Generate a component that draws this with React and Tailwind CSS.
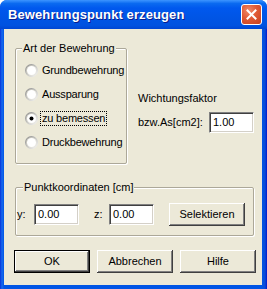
function Radio({ checked }) {
  return (
    <svg width="13" height="13" viewBox="0 0 13 13" className="shrink-0">
      <defs>
        <linearGradient id="ro" x1="0" y1="0" x2="1" y2="1">
          <stop offset="0" stopColor="#808080" />
          <stop offset="1" stopColor="#ffffff" />
        </linearGradient>
        <linearGradient id="ri" x1="0" y1="0" x2="1" y2="1">
          <stop offset="0" stopColor="#b8b6ac" />
          <stop offset="1" stopColor="#f4f3ee" />
        </linearGradient>
      </defs>
      <circle cx="6.5" cy="6.5" r="6.5" fill="url(#ro)" />
      <circle cx="6.5" cy="6.5" r="5.5" fill="url(#ri)" />
      <circle cx="6.5" cy="6.5" r="4.5" fill="#ffffff" />
      {checked && <circle cx="6.5" cy="6.5" r="2" fill="#000000" />}
    </svg>
  );
}

function Field({ value, className = "" }) {
  return (
    <div
      className={`h-[21px] w-[45px] shrink-0 bg-white border border-t-[#808080] border-l-[#808080] border-r-white border-b-white shadow-[inset_1px_1px_0_#404040,inset_-1px_-1px_0_#d4d0c8] pl-[3px] flex items-center ${className}`}
    >
      {value}
    </div>
  );
}

function Button({ label, primary, className = "" }) {
  return (
    <div
      className={`h-[23px] w-[76px] shrink-0 flex items-center justify-center bg-[#ece9d8] ${
        primary
          ? "border border-black shadow-[inset_-1px_-1px_0_#404040,inset_1px_1px_0_#ffffff,inset_-2px_-2px_0_#808080]"
          : "shadow-[inset_-1px_-1px_0_#404040,inset_1px_1px_0_#ffffff,inset_-2px_-2px_0_#808080]"
      } ${className}`}
    >
      {label}
    </div>
  );
}

export default function App() {
  const options = [
    { label: "Grundbewehrung" },
    { label: "Aussparung" },
    { label: "zu bemessen", checked: true },
    { label: "Druckbewehrung" },
  ];

  return (
    <div className="w-[267px] h-[289px] flex flex-col rounded-t-[7px] overflow-hidden bg-[linear-gradient(to_right,#0831d9_0px,#166aee_2px,#0055e5_4px,#0055e5_262px,#0a4cd6_265px,#0019cf_267px)] font-['Liberation_Sans',Arial,sans-serif] text-[11px] text-black">
      {/* title bar */}
      <div className="h-[29px] shrink-0 flex items-center justify-between pl-[8px] pr-[5px] bg-[linear-gradient(to_bottom,#3d95ff_0%,#0a6af0_12%,#0058ee_28%,#0055e5_60%,#0052e0_88%,#0046d2_100%)]">
        <span className="text-white font-bold text-[13px] tracking-[0.1px] [text-shadow:1px_1px_0_#0a1e8c]">
          Bewehrungspunkt erzeugen
        </span>
        <div className="w-[21px] h-[21px] rounded-[3px] border border-white bg-[radial-gradient(circle_at_35%_30%,#f08a6a_0%,#e05a35_45%,#c8401e_100%)] flex items-center justify-center">
          <svg width="11" height="11" viewBox="0 0 11 11">
            <path d="M1.5 1.5 L9.5 9.5 M9.5 1.5 L1.5 9.5" stroke="#ffffff" strokeWidth="2" strokeLinecap="square" />
          </svg>
        </div>
      </div>

      {/* body */}
      <div className="flex-1 ml-[4px] mr-[5px] mb-[4px] bg-[#ece9d8] pt-[19px] pl-[10px]">
        <div className="flex">
          <div className="relative ml-[1px] w-[112px] h-[116px] shrink-0 border border-[#aca899] rounded-[2px] shadow-[1px_1px_0_#ffffff,inset_1px_1px_0_#ffffff]">
            <span className="absolute -top-[7px] left-[6px] px-[1px] leading-[13px] bg-[#ece9d8]">
              Art der Bewehrung
            </span>
            <div className="flex flex-col pt-[9px] pl-[9px]">
              {options.map((o) => (
                <div key={o.label} className="h-[24px] flex items-center gap-[3px]">
                  <Radio checked={o.checked} />
                  <span
                    className={`leading-[13px] tracking-[-0.2px] ${
                      o.checked ? "border border-dotted border-black px-[1px] -ml-[1px]" : "pl-[1px]"
                    }`}
                  >
                    {o.label}
                  </span>
                </div>
              ))}
            </div>
          </div>

          <div className="ml-[11px] flex flex-col pt-[44px]">
            <span className="leading-[13px]">Wichtungsfaktor</span>
            <div className="mt-[7px] flex items-center">
              <span className="w-[71px] shrink-0">bzw.As[cm2]:</span>
              <Field value="1.00" />
            </div>
          </div>
        </div>

        <div className="relative ml-[1px] mt-[23px] w-[239px] h-[49px] border border-[#aca899] rounded-[2px] shadow-[1px_1px_0_#ffffff,inset_1px_1px_0_#ffffff]">
          <span className="absolute -top-[7px] left-[7px] px-[1px] leading-[13px] bg-[#ece9d8]">
            Punktkoordinaten [cm]
          </span>
          <div className="flex items-center pt-[15px] pl-[1px]">
            <span className="w-[17px] shrink-0">y:</span>
            <Field value="0.00" />
            <span className="ml-[15px] w-[15px] shrink-0">z:</span>
            <Field value="0.00" />
            <Button label="Selektieren" className="ml-[15px] h-[22px] w-[75px]" />
          </div>
        </div>

        <div className="mt-[14px] flex gap-[6px]">
          <Button label="OK" primary />
          <Button label="Abbrechen" className="ml-[1px]" />
          <Button label="Hilfe" className="ml-[1px]" />
        </div>
      </div>
    </div>
  );
}
